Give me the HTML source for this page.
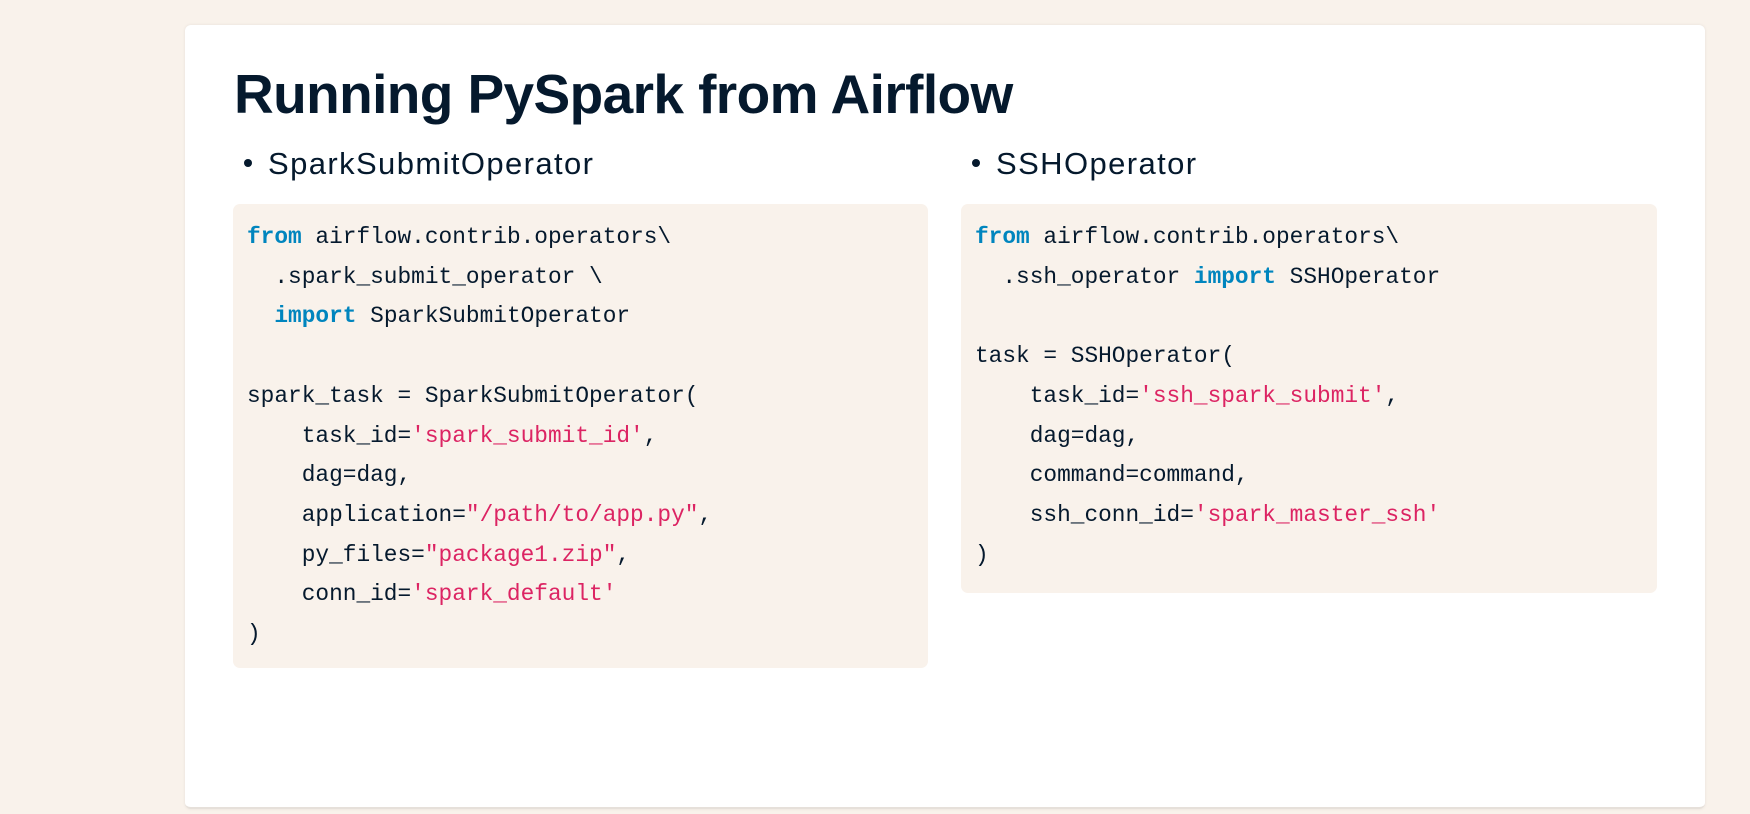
<!DOCTYPE html>
<html><head><meta charset="utf-8"><style>
html,body{margin:0;padding:0;width:1750px;height:814px;overflow:hidden;background:#f9f2eb;}
.card{position:absolute;left:185px;top:25px;width:1520px;height:782px;background:#fff;border-radius:6px;border-bottom:2px solid #e6e0da;box-shadow:0 0 3px rgba(0,0,0,0.08);}
h1{position:absolute;left:234px;top:62px;margin:0;font:bold 55px "Liberation Sans",sans-serif;color:#05192d;letter-spacing:-0.6px;}
.b{position:absolute;top:146px;font:31px "Liberation Sans",sans-serif;color:#05192d;letter-spacing:1.4px;}
.b:before{content:"";display:inline-block;width:8px;height:8px;border-radius:50%;background:#05192d;margin:0 16px 5px 10px;vertical-align:middle;}
pre{position:absolute;margin:0;background:#f9f2eb;border-radius:7px;box-sizing:border-box;padding:14px 0 0 14px;font:22.8px/39.7px "Liberation Mono",monospace;color:#05192d;}
.k{color:#0085be;font-weight:bold}.s{color:#dc2463}
</style></head><body>
<div class="card"></div>
<h1>Running PySpark from Airflow</h1>
<div class="b" style="left:234px">SparkSubmitOperator</div>
<div class="b" style="left:962px">SSHOperator</div>
<pre style="left:233px;top:204px;width:695px;height:464px"><span class="k">from</span> airflow.contrib.operators\
  .spark_submit_operator \
  <span class="k">import</span> SparkSubmitOperator

spark_task = SparkSubmitOperator(
    task_id=<span class="s">'spark_submit_id'</span>,
    dag=dag,
    application=<span class="s">"/path/to/app.py"</span>,
    py_files=<span class="s">"package1.zip"</span>,
    conn_id=<span class="s">'spark_default'</span>
)</pre>
<pre style="left:961px;top:204px;width:696px;height:389px"><span class="k">from</span> airflow.contrib.operators\
  .ssh_operator <span class="k">import</span> SSHOperator

task = SSHOperator(
    task_id=<span class="s">'ssh_spark_submit'</span>,
    dag=dag,
    command=command,
    ssh_conn_id=<span class="s">'spark_master_ssh'</span>
)</pre>
</body></html>
